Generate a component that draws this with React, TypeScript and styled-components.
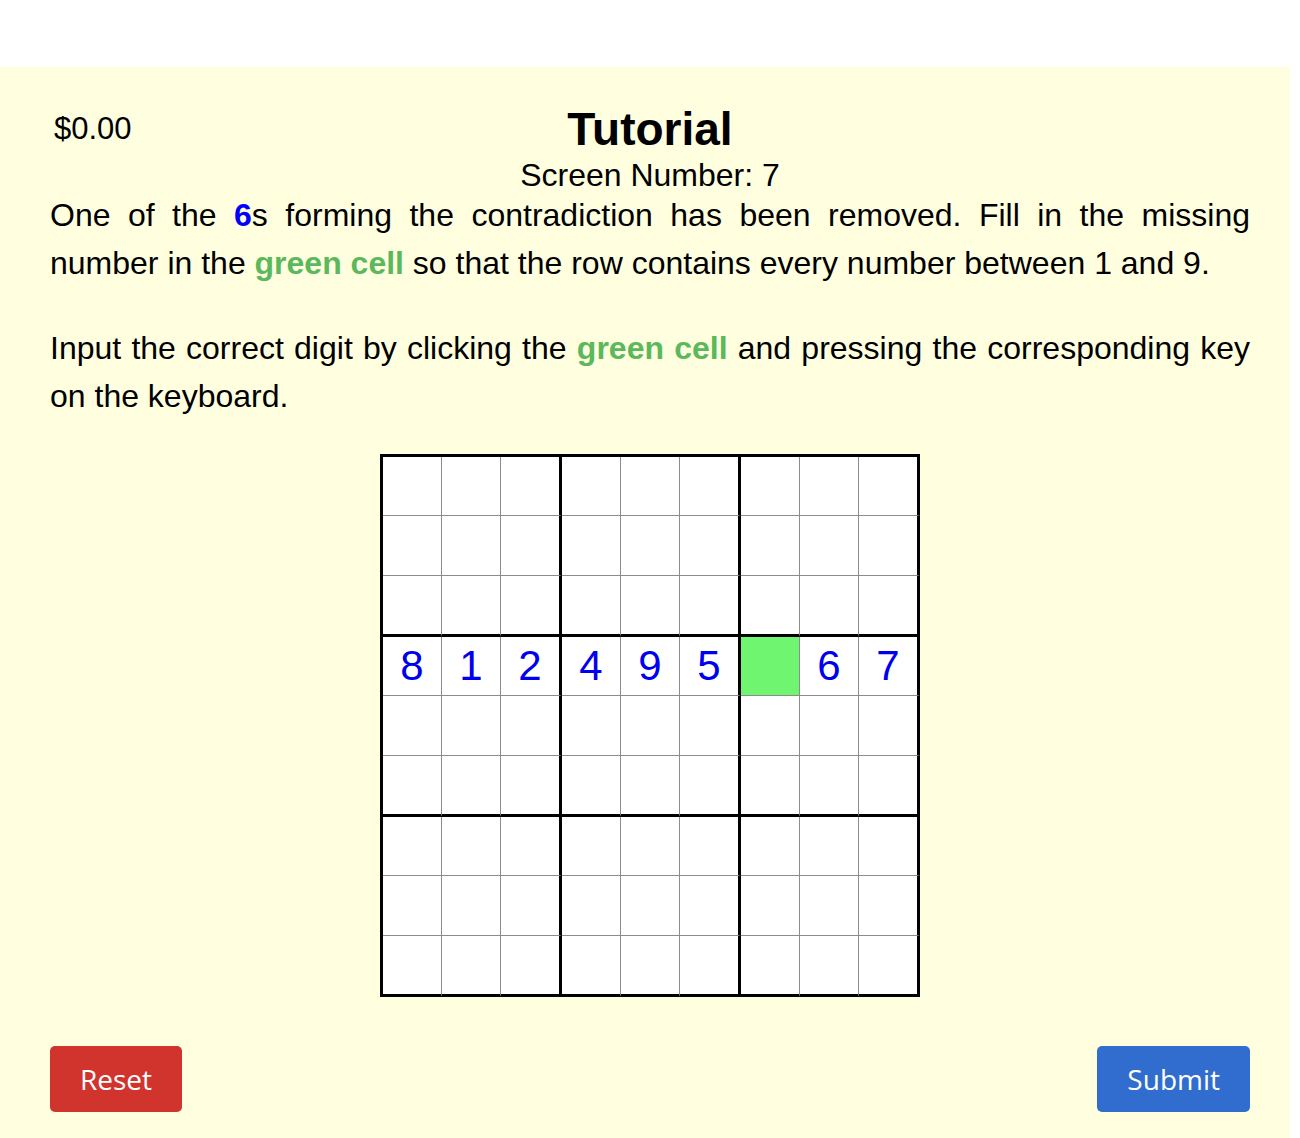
import React from 'react';
import styled, { createGlobalStyle } from 'styled-components';

const GlobalStyle = createGlobalStyle`
    body {
        margin: 0;
        background: #ffffff;
        font-family: "Liberation Sans", Arial, sans-serif;
    }
`;

const Page = styled.div`
    margin-top: 67px;
    width: 1290px;
    box-sizing: border-box;
    padding: 0 40px 40px 50px;
    background: #ffffe0;
    color: #000;
`;

const Header = styled.div`
    display: grid;
    grid-template-columns: 1fr auto 1fr;
    padding-top: 36px;
`;

const Money = styled.div`
    font-size: 31px;
    line-height: 37px;
    padding: 7px 0 0 4px;
`;

const TitleBlock = styled.div`
    display: flex;
    flex-direction: column;
    align-items: center;
`;

const Title = styled.h1`
    margin: 0;
    font-size: 46px;
    line-height: 53px;
    font-weight: 700;
`;

const Subtitle = styled.div`
    margin-top: 3px;
    font-size: 32px;
    line-height: 32px;
`;

const Paragraph = styled.p<{ $gap?: number }>`
    margin: ${p => p.$gap || 0}px 0 0;
    font-size: 32px;
    line-height: 48px;
    text-align: justify;
`;

const Six = styled.b`
    color: #0000ff;
`;

const Green = styled.b`
    color: #5cb85c;
`;

const Board = styled.div`
    margin: 34px auto 0;
    width: max-content;
    display: grid;
    grid-template-columns: repeat(9, auto);
    border-left: 3px solid #000;
    border-top: 3px solid #000;
    background: #fff;
`;

const Cell = styled.div<{ $thickRight: boolean; $thickBottom: boolean; $active?: boolean }>`
    width: 58px;
    height: 58.34px;
    display: flex;
    align-items: center;
    justify-content: center;
    border-right: ${p => (p.$thickRight ? '3px solid #000' : '1px solid #8c8c8c')};
    border-bottom: ${p => (p.$thickBottom ? '3px solid #000' : '1px solid #8c8c8c')};
    background: ${p => (p.$active ? '#70f570' : '#fff')};
    color: #0000f0;
    font-size: 42px;
    line-height: 1;
`;

const Footer = styled.div`
    display: flex;
    justify-content: space-between;
    margin-top: 49px;
`;

const Button = styled.button<{ $color: string }>`
    height: 66px;
    padding: 0 30px;
    border: none;
    border-radius: 5px;
    background: ${p => p.$color};
    color: #fff;
    font-family: "Open Sans", sans-serif;
    font-size: 28px;
    cursor: pointer;
`;

const row: (number | null)[] = [8, 1, 2, 4, 9, 5, null, 6, 7];

const App: React.FunctionComponent = () => {
    const cells = [];
    for (let r = 0; r < 9; r++) {
        for (let c = 0; c < 9; c++) {
            const value = r === 3 ? row[c] : null;
            cells.push(
                <Cell
                    key={`${r}-${c}`}
                    $thickRight={c % 3 === 2}
                    $thickBottom={r % 3 === 2}
                    $active={r === 3 && c === 6}
                >
                    {value}
                </Cell>
            );
        }
    }

    return (
        <>
            <GlobalStyle />
            <Page>
                <Header>
                    <Money>$0.00</Money>
                    <TitleBlock>
                        <Title>Tutorial</Title>
                        <Subtitle>Screen Number: 7</Subtitle>
                    </TitleBlock>
                    <div />
                </Header>

                <Paragraph>
                    One of the <Six>6</Six>s forming the contradiction has been removed. Fill in the missing
                    number in the <Green>green cell</Green> so that the row contains every number between 1 and 9.
                </Paragraph>
                <Paragraph $gap={37}>
                    Input the correct digit by clicking the <Green>green cell</Green> and pressing the corresponding key
                    on the keyboard.
                </Paragraph>

                <Board>{cells}</Board>

                <Footer>
                    <Button $color="#d1342c">Reset</Button>
                    <Button $color="#306dce">Submit</Button>
                </Footer>
            </Page>
        </>
    );
};

export default App;
